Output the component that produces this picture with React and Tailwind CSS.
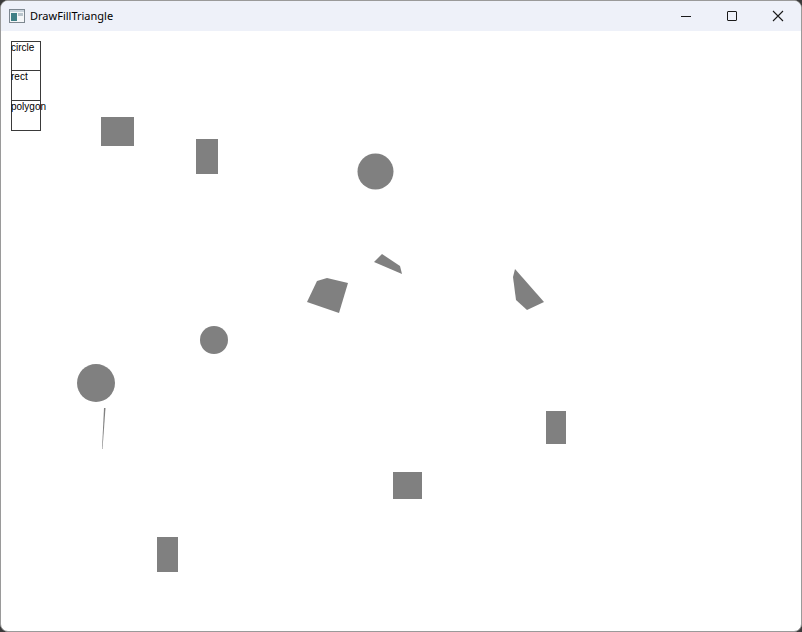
import React from 'react';

const shapes = {
  rects: [
    [101, 117, 33, 29],
    [196, 139, 22, 35],
    [546, 411, 20, 33],
    [393, 472, 29, 27],
    [157, 537, 21, 35],
  ],
  circles: [
    [375.5, 171.5, 18],
    [214, 340, 14],
    [96, 383, 19],
  ],
  polys: [
    '317,281 327,278 348,283 339,313 307,302',
    '374,262 382,254 400,266 402,274',
    '515,269 513,277 516,300 527,310 544,302',
    '104,408 105.5,408 102.5,449 102,449',
  ],
};

function AppIcon() {
  return (
    <svg width="16" height="14" viewBox="0 0 16 14">
      <rect x="0.5" y="0.5" width="15" height="13" fill="#f4f6f8" stroke="#7d8790" />
      <rect x="1" y="1" width="14" height="2" fill="#c9d3dc" />
      <rect x="2" y="4" width="6" height="8" fill="#3f7f86" />
      <rect x="9" y="4" width="5" height="3" fill="#b8c4cc" />
    </svg>
  );
}

function TitleBar() {
  return (
    <div className="h-[30px] bg-[#eef1f9] flex items-center shrink-0">
      <div className="pl-[8px] pr-[5px] flex items-center">
        <AppIcon />
      </div>
      <span className="text-[11px] text-black" style={{ fontFamily: '"Noto Sans", "Liberation Sans", sans-serif' }}>
        DrawFillTriangle
      </span>
      <div className="ml-auto flex h-full">
        <div className="w-[46px] flex items-center justify-center">
          <div className="w-[10px] h-px bg-[#1a1a1a]" />
        </div>
        <div className="w-[46px] flex items-center justify-center">
          <div className="w-[10px] h-[10px] border border-[#1a1a1a] rounded-[1px]" />
        </div>
        <div className="w-[46px] flex items-center justify-center">
          <svg width="12" height="12" viewBox="0 0 12 12">
            <path d="M1 1 L11 11 M11 1 L1 11" stroke="#1a1a1a" strokeWidth="1.1" />
          </svg>
        </div>
      </div>
    </div>
  );
}

export default function App() {
  const labels = ['circle', 'rect', 'polygon'];
  return (
    <div className="w-[802px] h-[632px] bg-[#3a3a3a]">
      <div className="relative w-full h-full flex flex-col bg-white border border-[#9a9a9a] rounded-[8px] overflow-hidden">
        <TitleBar />
        <div className="flex-1 pt-[10px] pl-[10px]">
          <div className="flex flex-col w-[30px]">
            {labels.map((l, i) => (
              <div
                key={l}
                className={`h-[30px] border border-[#3a3a3a] leading-none text-[10px] text-black whitespace-nowrap overflow-visible ${i > 0 ? '-mt-px h-[31px]' : ''}`}
                style={{ fontFamily: '"Liberation Sans", Arial, sans-serif' }}
              >
                <span className="block -ml-px pt-px">{l}</span>
              </div>
            ))}
          </div>
        </div>
        <svg className="absolute -left-px -top-px pointer-events-none" width="802" height="632">
          {shapes.rects.map(([x, y, w, h], i) => (
            <rect key={'r' + i} x={x} y={y} width={w} height={h} fill="#808080" />
          ))}
          {shapes.circles.map(([cx, cy, r], i) => (
            <circle key={'c' + i} cx={cx} cy={cy} r={r} fill="#808080" />
          ))}
          {shapes.polys.map((p, i) => (
            <polygon key={'p' + i} points={p} fill="#808080" />
          ))}
        </svg>
      </div>
    </div>
  );
}
